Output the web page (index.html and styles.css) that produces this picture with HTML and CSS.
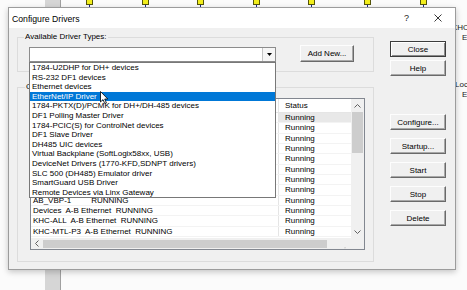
FILE: index.html
```html
<!DOCTYPE html>
<html>
<head>
<meta charset="utf-8">
<link rel="stylesheet" href="styles.css">
</head>
<body>
<div class="desk">
  <div class="bgbar"></div>
  <div class="nodes">
    <div class="node"></div><div class="node"></div><div class="node"></div><div class="node"></div><div class="node"></div><div class="node"></div><div class="node"></div>
  </div>
  <div class="side side-khc">KHC</div>
  <div class="side side-e1">E</div>
  <div class="side side-loc">Loc</div>
  <div class="side side-e2">E</div>

  <div class="dialog">
    <div class="titlebar">
      <span class="title">Configure Drivers</span>
      <span class="qmark">?</span>
      <svg class="xicon" width="8" height="8" viewBox="0 0 8 8"><path d="M0.5 0.5 L7.5 7.5 M7.5 0.5 L0.5 7.5" stroke="#222" stroke-width="0.9" fill="none"/></svg>
    </div>
    <div class="body">
      <div class="left">
        <fieldset class="group g1">
          <legend>Available Driver Types:</legend>
          <div class="g1row">
            <div class="combo">
              <div class="combo-btn"><svg width="5" height="3" viewBox="0 0 5 3"><path d="M0 0 H5 L2.5 3 Z" fill="#000"/></svg></div>
              <ul class="dropdown">
                <li>1784-U2DHP for DH+ devices</li>
                <li>RS-232 DF1 devices</li>
                <li>Ethernet devices</li>
                <li class="sel">EtherNet/IP Driver</li>
                <li>1784-PKTX(D)/PCMK for DH+/DH-485 devices</li>
                <li>DF1 Polling Master Driver</li>
                <li>1784-PCIC(S) for ControlNet devices</li>
                <li>DF1 Slave Driver</li>
                <li>DH485 UIC devices</li>
                <li>Virtual Backplane (SoftLogix58xx, USB)</li>
                <li>DeviceNet Drivers (1770-KFD,SDNPT drivers)</li>
                <li>SLC 500 (DH485) Emulator driver</li>
                <li>SmartGuard USB Driver</li>
                <li>Remote Devices via Linx Gateway</li>
                <svg class="cursor" width="9" height="14" viewBox="0 0 9 14"><path d="M0.5 0.5 L0.5 11 L3 8.6 L4.8 12.6 L6.4 11.9 L4.7 8 L7.8 8 Z" fill="#fff" stroke="#000" stroke-width="0.8" stroke-linejoin="round"/></svg>
              </ul>
            </div>
            <button class="btn addnew">Add New...</button>
          </div>
        </fieldset>
        <fieldset class="group g2">
          <legend>Configured Drivers:</legend>
          <div class="listview">
            <div class="lv-main">
              <div class="lv-head">
                <div class="col-name"></div>
                <div class="col-status">Status</div>
              </div>
              <div class="lv-row first"><div class="col-name"></div><div class="col-status">Running</div></div>
              <div class="lv-row"><div class="col-name"></div><div class="col-status">Running</div></div>
              <div class="lv-row"><div class="col-name"></div><div class="col-status">Running</div></div>
              <div class="lv-row"><div class="col-name"></div><div class="col-status">Running</div></div>
              <div class="lv-row"><div class="col-name"></div><div class="col-status">Running</div></div>
              <div class="lv-row"><div class="col-name"></div><div class="col-status">Running</div></div>
              <div class="lv-row"><div class="col-name"></div><div class="col-status">Running</div></div>
              <div class="lv-row"><div class="col-name"></div><div class="col-status">Running</div></div>
              <div class="lv-row"><div class="col-name">AB_VBP-1         RUNNING</div><div class="col-status">Running</div></div>
              <div class="lv-row"><div class="col-name">Devices  A-B Ethernet  RUNNING</div><div class="col-status">Running</div></div>
              <div class="lv-row"><div class="col-name">KHC-ALL  A-B Ethernet  RUNNING</div><div class="col-status">Running</div></div>
              <div class="lv-row"><div class="col-name">KHC-MTL-P3  A-B Ethernet  RUNNING</div><div class="col-status">Running</div></div>
            </div>
            <div class="vscroll">
              <div class="sb-arrow up"><svg width="7" height="4" viewBox="0 0 7 4"><path d="M0.5 3.5 L3.5 0.5 L6.5 3.5" stroke="#606060" fill="none"/></svg></div>
              <div class="vthumb"></div>
              <div class="sb-arrow down"><svg width="7" height="4" viewBox="0 0 7 4"><path d="M0.5 0.5 L3.5 3.5 L6.5 0.5" stroke="#606060" fill="none"/></svg></div>
            </div>
            <div class="hscroll">
              <div class="sb-arrow left"><svg width="4" height="7" viewBox="0 0 4 7"><path d="M3.5 0.5 L0.5 3.5 L3.5 6.5" stroke="#606060" fill="none"/></svg></div>
              <div class="hthumb"></div>
              <div class="sb-arrow right"><svg width="4" height="7" viewBox="0 0 4 7"><path d="M0.5 0.5 L3.5 3.5 L0.5 6.5" stroke="#606060" fill="none"/></svg></div>
            </div>
            <div class="corner"></div>
          </div>
        </fieldset>
      </div>
      <div class="right">
        <button class="btn default">Close</button>
        <button class="btn help">Help</button>
        <button class="btn configure">Configure...</button>
        <button class="btn gap">Startup...</button>
        <button class="btn gap">Start</button>
        <button class="btn gap">Stop</button>
        <button class="btn gap">Delete</button>
      </div>
    </div>
  </div>
</div>
</body>
</html>
```
FILE: styles.css
```css
* { box-sizing: border-box; }
html, body { margin: 0; padding: 0; }
body {
  width: 467px; height: 290px; overflow: hidden;
  background: #fbfbfb;
  font-family: "Liberation Sans", Arial, sans-serif;
  font-size: 8px; color: #000;
}
.desk { position: relative; width: 467px; height: 290px; overflow: hidden; background: #fbfbfb; }
.bgbar {
  position: absolute; left: 45px; top: 0; width: 16px; height: 290px;
  background: #d6d6d6; border-right: 1px solid #a0a0a0;
}
.nodes {
  position: absolute; left: 86px; top: -1px;
  display: flex; gap: 48.6px;
}
.node {
  position: relative; width: 7px; height: 6px;
  background: #f2ee1c; border: 1px solid #55550a;
}
.node::after {
  content: ""; position: absolute; left: 2px; top: 5px;
  width: 1px; height: 3px; background: #1c2a8c;
}
.side { position: absolute; font-size: 8px; line-height: 10px; color: #222; }
.side-khc { left: 452px; top: 23px; }
.side-e1 { left: 462px; top: 33px; }
.side-loc { left: 455px; top: 80px; }
.side-e2 { left: 462px; top: 90px; }

.dialog {
  position: absolute; left: 8px; top: 7px; width: 448px; height: 263px;
  background: #f0f0f0; border: 1px solid #9c9c9c;
  box-shadow: 0 2px 6px rgba(0,0,0,0.22);
  display: flex; flex-direction: column;
}
.titlebar {
  height: 20px; flex: none; background: #fff;
  display: flex; align-items: center;
  padding: 0 13px 0 3px; font-size: 8.7px;
}
.title { flex: 1; padding-top: 1px; }
.qmark { font-size: 9px; margin-right: 25px; color: #222; }
.xicon { display: block; }

.body { flex: 1; display: flex; padding: 4px 9px 0 8px; gap: 16px; }
.left { width: 357px; display: flex; flex-direction: column; }
.group {
  margin: 0; min-width: 0; width: 357px;
  border: 1px solid #dcdcdc;
}
.group legend {
  padding: 0 1px; margin-left: -5px;
  line-height: 10px; height: 10px; font-size: 8px;
}
.g1 { padding: 3px 0 9px 11px; }
.g2 { margin-top: 10px; padding: 6px 0 11px 12px; }

.g1row { display: flex; align-items: flex-end; height: 17px; }
.combo {
  position: relative; width: 247px; height: 15px;
  background: #fff; border: 1px solid #8c8c8c;
  display: flex; justify-content: flex-end;
}
.combo-btn {
  width: 13px; height: 100%;
  border-left: 1px solid #c4c4c4; background: #f6f6f6;
  display: flex; align-items: center; justify-content: center;
}
.combo-btn svg { display: block; }
.dropdown {
  position: absolute; z-index: 10;
  top: calc(100% + 1px); left: -1px; width: 247px; height: 136px;
  margin: 0; padding: 0; list-style: none;
  background: #fff; border: 1px solid #787878;
}
.dropdown li {
  height: 9.6px; line-height: 9.6px; padding-left: 2px;
  white-space: nowrap; overflow: hidden;
}
.dropdown li.sel { background: #0078d7; color: #fff; }
.cursor { position: absolute; left: 70px; top: 28px; display: block; }

.btn {
  font-family: "Liberation Sans", Arial, sans-serif; font-size: 8px; color: #000;
  background: #f0f0f0; padding: 0; margin: 0;
  border: 1px solid; border-color: #fdfdfd #6a6a6a #6a6a6a #fdfdfd;
  box-shadow: inset -1px -1px 0 #a8a8a8;
  display: flex; align-items: center; justify-content: center;
}
.addnew { width: 54px; height: 17px; margin-left: 24px; }
.right { width: 56px; display: flex; flex-direction: column; padding-top: 9px; }
.right .btn { width: 56px; height: 16px; flex: none; }
.right .default {
  border-color: #3c3c3c;
  box-shadow: inset 1px 1px 0 #fff, inset -1px -1px 0 #8a8a8a;
}
.right .help { margin-top: 3px; }
.right .configure { margin-top: 38px; }
.right .gap { margin-top: 8px; }

.listview {
  width: 335px; height: 152px;
  background: #fff; border: 1px solid #828790;
  display: grid; grid-template-columns: 1fr 13px; grid-template-rows: 1fr 11px;
  overflow: hidden;
}
.lv-main { overflow: hidden; }
.lv-head { display: flex; height: 14px; border-bottom: 1px solid #e5e5e5; }
.lv-head > div { line-height: 13px; }
.col-name { width: 247px; padding-left: 2px; white-space: pre; overflow: hidden; flex: none; }
.col-status { flex: 1; padding-left: 6px; border-left: 1px solid #e5e5e5; white-space: nowrap; }
.lv-row { display: flex; height: 10.35px; line-height: 10.35px; border-bottom: 1px solid #f3f3f3; }
.lv-row.first .col-status { background: #e8e8e8; }

.vscroll { background: #f0f0f0; display: flex; flex-direction: column; }
.sb-arrow { display: flex; align-items: center; justify-content: center; flex: none; }
.sb-arrow svg { display: block; }
.vscroll .sb-arrow { height: 13px; }
.vthumb { height: 41px; margin: 0 1px; background: #cdcdcd; }
.vscroll .down { margin-top: auto; }
.hscroll { background: #f0f0f0; display: flex; align-items: center; }
.hscroll .sb-arrow { width: 12px; height: 11px; }
.hthumb { width: 284px; height: 8px; background: #cdcdcd; }
.hscroll .sb-arrow.right { margin-left: auto; width: 13px; }
.corner { background: #f0f0f0; }
```
